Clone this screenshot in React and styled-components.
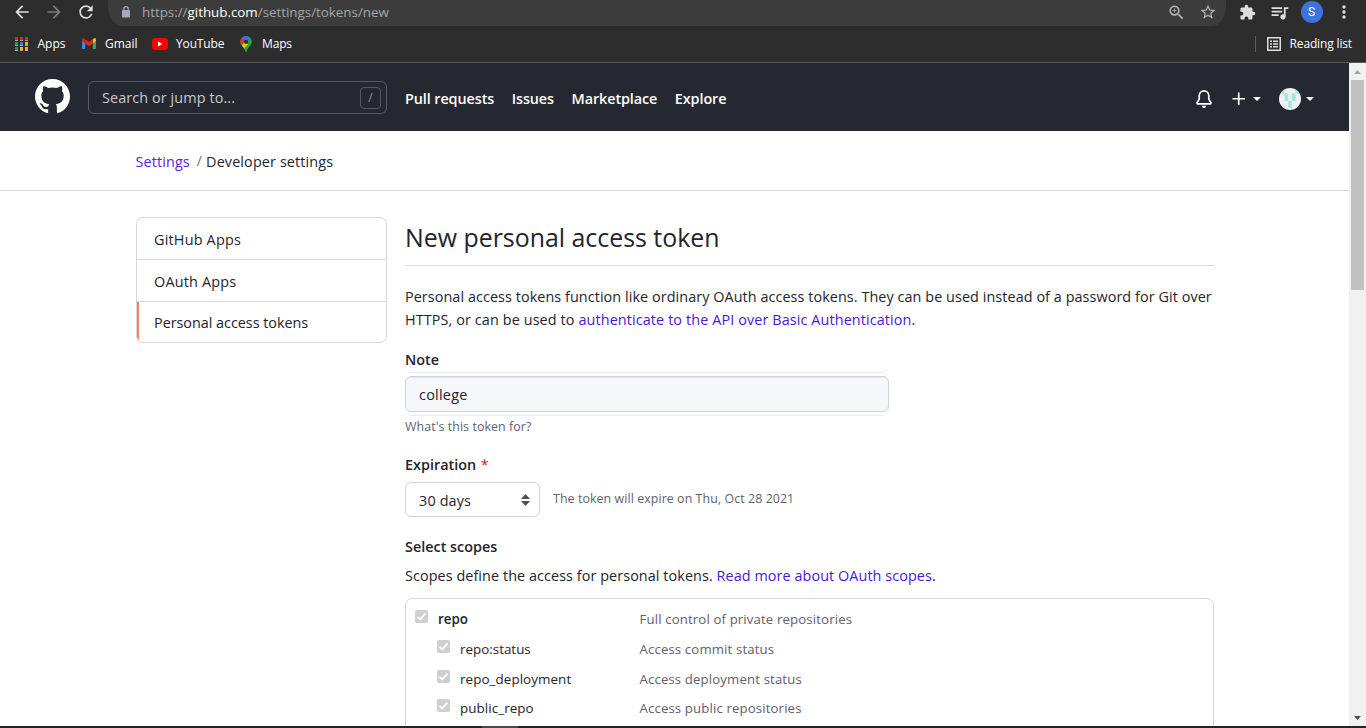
import React from "react";
import styled, { createGlobalStyle } from "styled-components";
import {
  MdArrowBack, MdArrowForward, MdRefresh, MdZoomIn,
  MdStarBorder, MdExtension, MdQueueMusic, MdMoreVert,
} from "react-icons/md";

const Global = createGlobalStyle`
  * { box-sizing: border-box; }
  body { margin: 0; background: #fff; overflow: hidden; font-family: "Open Sans", "Noto Sans", sans-serif; color: #24242c; }
  h2, p { margin: 0; font-weight: 400; }
  a { text-decoration: none; color: #4c16dc; }
  svg { display: block; flex: none; }
`;

const Window = styled.div`
  display: flex;
  flex-direction: column;
  width: 1366px;
  height: 728px;
  overflow: hidden;
`;

/* Browser chrome */
const Chrome = styled.header`
  height: 63px;
  flex: none;
  background: #2d2d2d;
  border-bottom: 1px solid #58565a;
`;
const Toolbar = styled.div`
  height: 26px;
  display: flex;
  align-items: flex-start;
  color: #dedede;
`;
const ToolIcon = styled.div`
  width: ${(p) => p.$w || 32}px;
  height: 24px;
  display: flex;
  align-items: center;
  justify-content: center;
  color: ${(p) => p.$color || "#dedede"};
`;
const NavButtons = styled.div`
  display: flex;
  width: 108px;
  padding-left: 6px;
`;
const AddressBar = styled.div`
  width: 1118px;
  height: 26px;
  padding: 0 2px 0 11px;
  display: flex;
  align-items: flex-start;
  background: #3c3c3c;
  border-radius: 0 0 14px 14px / 0 0 20px 20px;
`;
const Url = styled.div`
  flex: 1;
  padding-left: 9px;
  line-height: 25px;
  font-size: 13.4px;
  letter-spacing: -0.02px;
  color: #a5a5a5;
  white-space: nowrap;
  b { font-weight: 400; color: #fff; }
`;
const Profile = styled.div`
  width: 22px;
  height: 22px;
  margin-left: 2px;
  border-radius: 50%;
  background: #3c73dc;
  color: #fff;
  font: 12px/22px Roboto, sans-serif;
  text-align: center;
`;
const Bookmarks = styled.div`
  height: 35px;
  display: flex;
  align-items: center;
  padding: 0 14px 0 15px;
  color: #fff;
  font-size: 12px;
`;
const Bookmark = styled.div`
  display: flex;
  align-items: center;
  gap: ${(p) => p.$gap}px;
  width: ${(p) => p.$w ? p.$w + "px" : "auto"};
  letter-spacing: ${(p) => p.$ls || 0}px;
  white-space: nowrap;
`;
const ReadingList = styled.div`
  margin-left: auto;
  display: flex;
  align-items: center;
  gap: 9px;
  padding-left: 11px;
  border-left: 1px solid #5c5c5c;
  height: 16px;
  letter-spacing: -0.15px;
`;

/* Page */
const Viewport = styled.div`
  flex: 1;
  display: flex;
  min-height: 0;
`;
const Page = styled.div`
  width: 1349px;
  overflow: hidden;
`;
const SiteHeader = styled.div`
  height: 68px;
  display: flex;
  align-items: center;
  padding: 0 35px;
  background: #262831;
  color: #fff;
`;
const Search = styled.div`
  width: 299px;
  height: 33px;
  margin: 1px 18px 0 18px;
  padding: 0 5px 0 13px;
  display: flex;
  align-items: center;
  justify-content: space-between;
  border: 1px solid #585a68;
  border-radius: 6px;
  color: #c8c8ca;
  font-size: 14.4px;
  letter-spacing: 0.1px;
`;
const SlashKey = styled.div`
  width: 21px;
  height: 22px;
  border: 1px solid #565862;
  border-radius: 4px;
  font-size: 12px;
  line-height: 20px;
  text-align: center;
  color: #8f9097;
`;
const Nav = styled.nav`
  flex: 1;
  display: flex;
  gap: 17.5px;
  padding-top: 3px;
  font-size: 14.4px;
  font-weight: 600;
  letter-spacing: -0.09px;
  white-space: nowrap;
`;
const HeaderActions = styled.div`
  display: flex;
  align-items: center;
  padding-top: 3px;
`;
const PlusWrap = styled.span`
  margin-left: 17px;
`;
const Caret = styled.span`
  margin: 0 ${(p) => p.$mr || 0}px 0 ${(p) => p.$ml}px;
  border: 4.5px solid transparent;
  border-top-color: #fff;
  border-bottom: 0;
`;
const Breadcrumb = styled.div`
  height: 60px;
  padding: 2px 0 0 135.5px;
  display: flex;
  align-items: center;
  border-bottom: 1px solid #d4dae0;
  font-size: 14.4px;
  letter-spacing: 0.12px;
  a { color: #5a22dd; }
`;
const Slash = styled.span`
  padding: 0 4px 3px 7px;
  color: #6c7178;
  font-size: 14px;
`;
const Columns = styled.div`
  display: flex;
  align-items: flex-start;
  gap: 18px;
  padding: 26px 0 0 136px;
`;
const Menu = styled.div`
  width: 251px;
  height: 126px;
  border: 1px solid #d3d7e0;
  border-radius: 7px;
  overflow: hidden;
  font-size: 14.4px;
`;
const MenuItem = styled.div`
  height: ${(p) => (p.$active ? 40 : 42)}px;
  line-height: ${(p) => (p.$active ? 42 : 44)}px;
  padding-left: ${(p) => (p.$active ? 15 : 17)}px;
  letter-spacing: ${(p) => (p.$active ? -0.03 : 0.2)}px;
  border-left: ${(p) => (p.$active ? "2px solid #fa8262" : "0")};
  border-bottom: ${(p) => (p.$active ? "0" : "1px solid #d6dae3")};
`;
const Main = styled.main`
  width: 809px;
`;
const Title = styled.h2`
  height: 49px;
  line-height: 40px;
  font-size: 24.9px;
  border-bottom: 1px solid #d6dde4;
  white-space: nowrap;
`;
const Intro = styled.div`
  margin-top: ${(p) => p.$top}px;
  font-size: 14.4px;
  line-height: 23px;
  white-space: nowrap;
`;
const Line = styled.span`
  display: block;
  letter-spacing: ${(p) => p.$ls || 0}px;
`;
const Label = styled.div`
  height: 24px;
  line-height: 24px;
  margin-top: ${(p) => p.$top}px;
  font-size: 14.4px;
  font-weight: 600;
  i { font-style: normal; font-weight: 400; color: #cf222e; margin-left: 1px; }
`;
const NoteFrame = styled.div`
  width: 484px;
  padding-bottom: 1px;
  display: flex;
  flex-direction: column;
`;
const Hairline = styled.div`
  height: 1px;
  margin: 0 4px;
  background: #eaecf5;
`;
const NoteInput = styled.div`
  height: 36px;
  margin: 3px 0;
  padding-left: 13px;
  border: 1px solid #cdd2dc;
  border-radius: 6px;
  background: #f6f7fa;
  box-shadow: inset 0 1px 0 #e6e9ef;
  line-height: 35px;
  font-size: 14.4px;
  letter-spacing: 0.25px;
`;
const Hint = styled.div`
  font-size: 12.4px;
  line-height: 20px;
  color: #62606c;
  letter-spacing: 0.08px;
  white-space: nowrap;
`;
const ExpirationRow = styled.div`
  display: flex;
  align-items: center;
  gap: 13px;
  margin-top: 5px;
  ${Hint} { padding-bottom: 2px; }
`;
const Select = styled.div`
  width: 135px;
  height: 35px;
  padding: 1px 9px 0 13px;
  display: flex;
  align-items: center;
  justify-content: space-between;
  border: 1px solid #d0d3de;
  border-radius: 6px;
  font-size: 14.4px;
  letter-spacing: 0.15px;
`;
const Scopes = styled.div`
  margin-top: 11px;
  padding-top: 5px;
  height: 150px;
  border: 1px solid #d3d5e0;
  border-radius: 7px 7px 0 0;
`;
const ScopeRow = styled.div`
  display: flex;
  height: 29.8px;
  line-height: 30px;
  padding-left: ${(p) => (p.$child ? 31 : 9)}px;
  font-size: 13.4px;
`;
const Check = styled.span`
  width: 13px;
  height: 13px;
  margin-top: 6px;
  border-radius: 2px;
  background: #cfcfcf;
`;
const ScopeName = styled.span`
  width: ${(p) => (p.$child ? 189.5 : 211.5)}px;
  padding-left: 10px;
  font-weight: ${(p) => (p.$child ? 400 : 600)};
  letter-spacing: ${(p) => p.$ls || 0}px;
`;
const ScopeText = styled.span`
  color: #62606c;
  font-size: 13.2px;
  letter-spacing: 0.14px;
`;

const Scrollbar = styled.div`
  width: 17px;
  display: flex;
  flex-direction: column;
  align-items: center;
  background: #f1f1f1;
`;
const Arrow = styled.span`
  height: 17px;
  display: flex;
  align-items: center;
`;
const Thumb = styled.div`
  width: 13px;
  height: 210px;
  margin-bottom: auto;
  background: #c1c1c1;
`;
const Taskbar = styled.div`
  height: 2px;
  flex: none;
  padding-left: 482px;
  background: #232323;
`;
const TaskItem = styled.div`
  width: 36px;
  height: 2px;
  background: #4a4a4a;
`;

const LockIcon = () => (
  <svg width="8" height="12" viewBox="0 0 8 12" fill="currentColor">
    <rect y="4" width="8" height="7.500" rx=".8" />
    <path d="M1.800 5V2.900a2.200 2.200 0 0 1 4.400 0V5" fill="none" stroke="currentColor" strokeWidth="1.200" />
  </svg>
);
const AppsIcon = () => (
  <svg width="13" height="14" viewBox="0 0 13 14" shapeRendering="crispEdges">
    {["#ea1c1c", "#ea1c1c", "#ea1c1c", "#0f9d58", "#4f6bf0", "#f4b400", "#0f9d58", "#f4b400", "#f4b400"].map((c, i) => (
      <rect key={i} x={(i % 3) * 5} y={Math.floor(i / 3) * 5} width="3" height="3" fill={c} />
    ))}
    <path d="M0 3.500h3m2 0h3m2 0h3M0 8.500h3m2 0h3m2 0h3M0 13.500h3m2 0h3m2 0h3" stroke="#a8a8a8" />
  </svg>
);
const GmailIcon = () => (
  <svg width="14" height="11" viewBox="0 0 14 11">
    <path d="M0 1.500V10q0 1 1 1h2.200V4z" fill="#4285f4" />
    <path d="M14 1.500V10q0 1-1 1h-2.200V4z" fill="#34a853" />
    <path d="M10.800 1.200L12.200.2Q14-.4 14 1.800V3l-3.200 2.400z" fill="#fbbc04" />
    <path d="M3.200 1.200L1.800.2Q0-.4 0 1.800V3l3.200 2.400z" fill="#c5221f" />
    <path d="M3.200 1.200L7 4.100l3.800-2.900v4.200L7 8.300 3.200 5.400z" fill="#ea2517" />
  </svg>
);
const YouTubeIcon = () => (
  <svg width="16" height="12" viewBox="0 0 16 12">
    <rect width="16" height="12" rx="3" fill="#f00" />
    <path d="M6 3.500l4.300 2.500L6 8.500z" fill="#fff" />
  </svg>
);
const MapsIcon = () => (
  <svg width="12" height="16" viewBox="0 0 12 16">
    <defs>
      <clipPath id="pin"><path d="M6 0a5.800 5.800 0 0 1 5.800 5.800C11.800 9.500 7.500 11 6.800 15.200Q6 16.600 5.200 15.200C4.500 11 .2 9.500.2 5.800A5.800 5.800 0 0 1 6 0z" /></clipPath>
    </defs>
    <g clipPath="url(#pin)">
      <path d="M0 0h12v16H0z" fill="#1fa84a" />
      <path d="M0 11L9 0H0z" fill="#ea2f1f" />
      <path d="M1.500 2L6 6l6-6H3z" fill="#3c6cf0" />
      <path d="M1 10.500L5 5.500l3 3-5 5z" fill="#fbbc04" />
    </g>
    <circle cx="6" cy="5.800" r="2.100" fill="#2d2d2d" />
  </svg>
);
const ReadingIcon = () => (
  <svg width="14" height="14" viewBox="0 0 14 14" fill="none" stroke="#dedede">
    <rect x=".75" y=".75" width="12.500" height="12.500" strokeWidth="1.500" />
    <path d="M3 4.200h2m1 0h5M3 7h2m1 0h5M3 9.800h2m1 0h5" strokeWidth="1.500" />
  </svg>
);
const GitHubMark = () => (
  <svg width="35" height="36" viewBox="0 0 16 16.450" fill="#fff">
    <path fillRule="evenodd" d="M8 0C3.58 0 0 3.58 0 8c0 3.54 2.29 6.53 5.47 7.59.4.07.55-.17.55-.38 0-.19-.01-.82-.01-1.49-2.01.37-2.53-.49-2.69-.94-.09-.23-.48-.94-.82-1.13-.28-.15-.68-.52-.01-.53.63-.01 1.08.58 1.23.82.72 1.21 1.87.87 2.33.66.07-.52.28-.87.51-1.07-1.78-.2-3.64-.89-3.64-3.95 0-.87.31-1.59.82-2.15-.08-.2-.36-1.02.08-2.12 0 0 .67-.21 2.2.82.64-.18 1.32-.27 2-.27.68 0 1.36.09 2 .27 1.53-1.04 2.2-.82 2.2-.82.44 1.1.16 1.92.08 2.12.51.56.82 1.27.82 2.15 0 3.07-1.87 3.75-3.65 3.95.29.25.54.73.54 1.48 0 1.07-.01 1.93-.01 2.2 0 .21.15.46.55.38A8.013 8.013 0 0016 8c0-4.42-3.58-8-8-8z" />
  </svg>
);
const BellIcon = () => (
  <svg width="18" height="18" viewBox="0 0 16 16" fill="#fff">
    <path d="M8 16a2 2 0 001.985-1.750c.017-.137-.097-.25-.235-.25h-3.500c-.138 0-.252.113-.235.25A2 2 0 008 16z" />
    <path fillRule="evenodd" d="M8 1.500A3.500 3.500 0 004.500 5v2.947c0 .346-.102.683-.294.970l-1.703 2.556a.018.018 0 00-.003.010l.001.006c0 .002.002.004.004.006a.017.017 0 00.006.004l.007.001h10.964l.007-.001a.016.016 0 00.006-.004.016.016 0 00.004-.006l.001-.007a.017.017 0 00-.003-.010l-1.703-2.554a1.750 1.750 0 01-.294-.970V5A3.500 3.500 0 008 1.500zM3 5a5 5 0 0110 0v2.947c0 .050.015.098.042.139l1.703 2.555A1.518 1.518 0 0113.482 13H2.518a1.518 1.518 0 01-1.263-2.360l1.703-2.554A.25.25 0 003 7.947V5z" />
  </svg>
);
const PlusIcon = () => (
  <svg width="18" height="18" viewBox="0 0 16 16" fill="#fff">
    <path d="M7.750 2a.75.75 0 01.75.75V7h4.250a.75.75 0 110 1.500H8.500v4.250a.75.75 0 11-1.500 0V8.500H2.750a.75.75 0 010-1.500H7V2.750A.75.75 0 017.750 2z" />
  </svg>
);
const Avatar = () => (
  <svg width="22" height="22" viewBox="0 0 22 22">
    <defs><clipPath id="av"><circle cx="11" cy="11" r="11" /></clipPath></defs>
    <g clipPath="url(#av)">
      <path d="M0 0h22v22H0z" fill="#f0f0f0" />
      <path d="M0 1.500h5.500v4H0zM16.500 1.500H22v4h-5.500zM5.500 5.500h3.700v7.500H5.500zM12.900 5.500h3.700v7.500h-3.700zM9.200 13h3.700v7H9.200z" fill="#98ecdf" />
    </g>
  </svg>
);

const SCOPES = [
  { name: "repo", text: "Full control of private repositories" },
  { name: "repo:status", text: "Access commit status", child: true },
  { name: "repo_deployment", text: "Access deployment status", child: true, ls: 0.08 },
  { name: "public_repo", text: "Access public repositories", child: true, ls: 0.08 },
];

export default function App() {
  return (
    <Window>
      <Global />
      <Chrome>
        <Toolbar>
          <NavButtons>
            <ToolIcon><MdArrowBack size={20} /></ToolIcon>
            <ToolIcon $color="#7a7a7a"><MdArrowForward size={20} /></ToolIcon>
            <ToolIcon><MdRefresh size={20} /></ToolIcon>
          </NavButtons>
          <AddressBar>
            <ToolIcon $w={14} $color="#a8abb5"><LockIcon /></ToolIcon>
            <Url>https://<b>github.com</b>/settings/tokens/new</Url>
            <ToolIcon $color="#b4b4b4"><MdZoomIn size={19} /></ToolIcon>
            <ToolIcon $color="#b4b4b4"><MdStarBorder size={18} /></ToolIcon>
          </AddressBar>
          <ToolIcon $w={43}><MdExtension size={17} /></ToolIcon>
          <ToolIcon $w={20}><MdQueueMusic size={21} /></ToolIcon>
          <ToolIcon $w={43}><Profile>S</Profile></ToolIcon>
          <ToolIcon $w={24}><MdMoreVert size={20} /></ToolIcon>
        </Toolbar>
        <Bookmarks>
          <Bookmark $gap={9.5} $w={67}><AppsIcon />Apps</Bookmark>
          <Bookmark $gap={9} $w={70}><GmailIcon />Gmail</Bookmark>
          <Bookmark $gap={8} $w={88} $ls={-0.15}><YouTubeIcon />YouTube</Bookmark>
          <Bookmark $gap={10} $ls={-0.15}><MapsIcon />Maps</Bookmark>
          <ReadingList><ReadingIcon />Reading list</ReadingList>
        </Bookmarks>
      </Chrome>
      <Viewport>
        <Page>
          <SiteHeader>
            <GitHubMark />
            <Search><span>Search or jump to...</span><SlashKey>/</SlashKey></Search>
            <Nav><span>Pull requests</span><span>Issues</span><span>Marketplace</span><span>Explore</span></Nav>
            <HeaderActions>
              <BellIcon />
              <PlusWrap><PlusIcon /></PlusWrap>
              <Caret $ml={5} $mr={18} />
              <Avatar />
              <Caret $ml={5} />
            </HeaderActions>
          </SiteHeader>
          <Breadcrumb><a>Settings</a><Slash>/</Slash><span>Developer settings</span></Breadcrumb>
          <Columns>
            <Menu>
              <MenuItem>GitHub Apps</MenuItem>
              <MenuItem>OAuth Apps</MenuItem>
              <MenuItem $active>Personal access tokens</MenuItem>
            </Menu>
            <Main>
              <Title>New personal access token</Title>
              <Intro $top={19}>
                <Line $ls={0.068}>Personal access tokens function like ordinary OAuth access tokens. They can be used instead of a password for Git over</Line>
                <Line $ls={0.11}>HTTPS, or can be used to <a>authenticate to the API over Basic Authentication</a>.</Line>
              </Intro>
              <Label $top={17}>Note</Label>
              <NoteFrame>
                <Hairline />
                <NoteInput>college</NoteInput>
                <Hairline />
              </NoteFrame>
              <Hint>What's this token for?</Hint>
              <Label $top={16}>Expiration <i>*</i></Label>
              <ExpirationRow>
                <Select>
                  <span>30 days</span>
                  <svg width="9" height="12" viewBox="0 0 9 12" fill="#4d5159"><path d="M4.500 0L9 5H0zM0 7h9l-4.500 5z" /></svg>
                </Select>
                <Hint>The token will expire on Thu, Oct 28 2021</Hint>
              </ExpirationRow>
              <Label $top={18}>Select scopes</Label>
              <Intro $top={5}><Line $ls={0.072}>Scopes define the access for personal tokens. <a>Read more about OAuth scopes</a>.</Line></Intro>
              <Scopes>
                {SCOPES.map((s) => (
                  <ScopeRow key={s.name} $child={s.child}>
                    <Check>
                      <svg width="13" height="13" viewBox="0 0 13 13" fill="none" stroke="#fff" strokeWidth="1.800"><path d="M2.500 6.800L5.200 9.400 10.500 3.500" /></svg>
                    </Check>
                    <ScopeName $child={s.child} $ls={s.ls}>{s.name}</ScopeName>
                    <ScopeText>{s.text}</ScopeText>
                  </ScopeRow>
                ))}
              </Scopes>
            </Main>
          </Columns>
        </Page>
        <Scrollbar>
          <Arrow><svg width="7" height="4" viewBox="0 0 7 4"><path d="M3.500 0L7 4H0z" fill="#a3a3a3" /></svg></Arrow>
          <Thumb />
          <Arrow><svg width="7" height="4" viewBox="0 0 7 4"><path d="M0 0h7L3.500 4z" fill="#505050" /></svg></Arrow>
        </Scrollbar>
      </Viewport>
      <Taskbar><TaskItem /></Taskbar>
    </Window>
  );
}
